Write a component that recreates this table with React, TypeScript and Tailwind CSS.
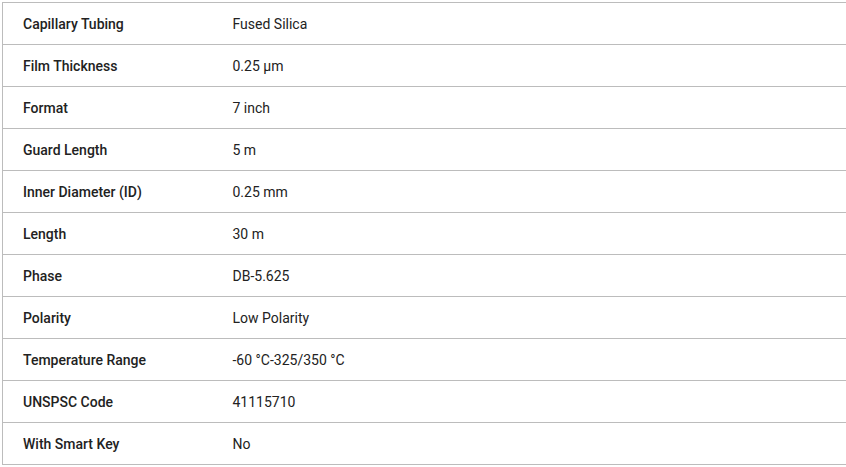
import React from 'react';

const specs: [string, string][] = [
  ['Capillary Tubing', 'Fused Silica'],
  ['Film Thickness', '0.25 µm'],
  ['Format', '7 inch'],
  ['Guard Length', '5 m'],
  ['Inner Diameter (ID)', '0.25 mm'],
  ['Length', '30 m'],
  ['Phase', 'DB-5.625'],
  ['Polarity', 'Low Polarity'],
  ['Temperature Range', '-60 °C-325/350 °C'],
  ['UNSPSC Code', '41115710'],
  ['With Smart Key', 'No'],
];

export default function App() {
  return (
    <div className="bg-white w-[846px] h-[467px] overflow-hidden pt-[2px] pl-[2px] font-['Roboto',sans-serif] text-[14px] text-[#222]">
      <table className="w-[844px] border-collapse border-t border-l border-[#bcbcbc]">
        <tbody>
          {specs.map(([label, value]) => (
            <tr key={label} className="h-[42px] border-b border-[#bcbcbc]">
              <td className="w-[210px] pl-[20px] pt-[2px] font-medium align-middle">{label}</td>
              <td className="pl-[20px] pt-[2px] align-middle">{value}</td>
            </tr>
          ))}
        </tbody>
      </table>
    </div>
  );
}
